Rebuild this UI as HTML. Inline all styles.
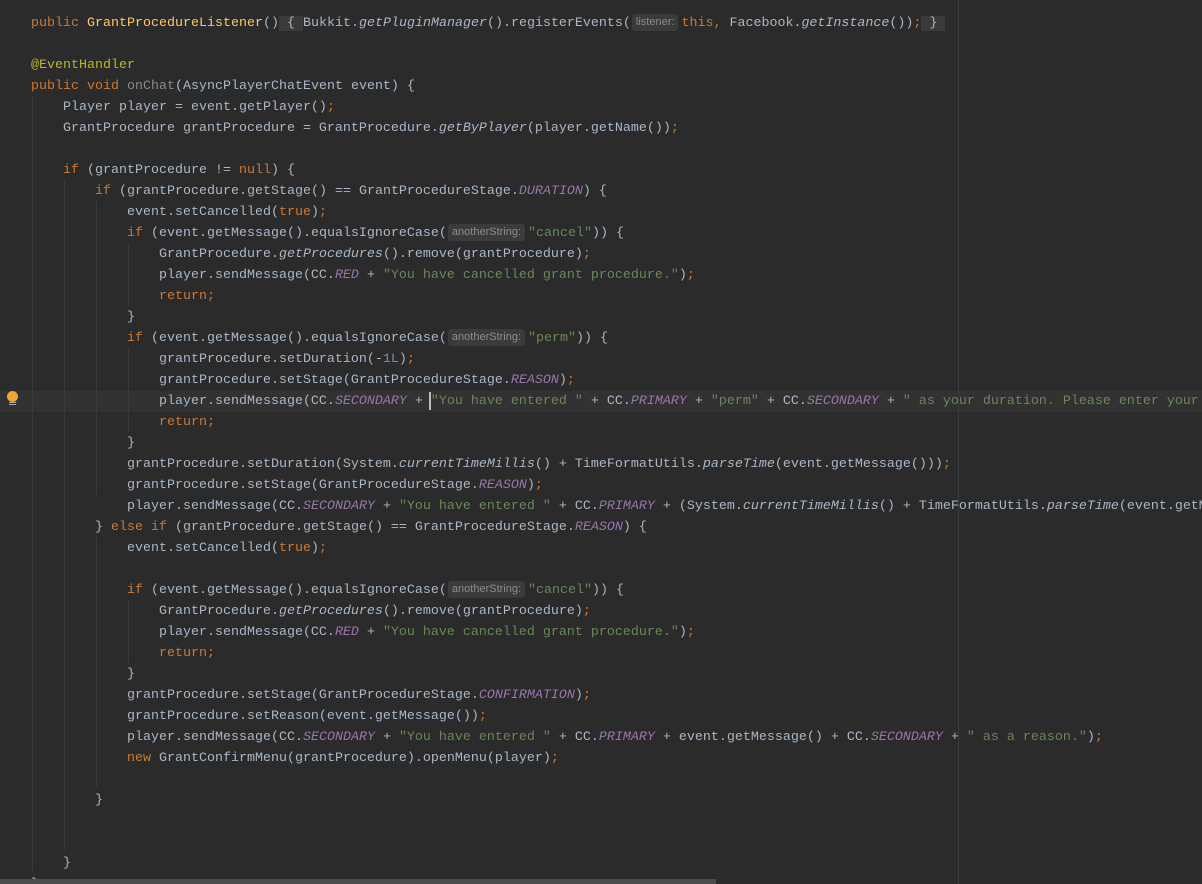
<!DOCTYPE html>
<html><head><meta charset="utf-8"><style>
html,body{margin:0;padding:0;background:#2b2b2b;width:1202px;height:884px;overflow:hidden;position:relative}
#w{position:absolute;left:0;top:0;width:1202px;height:884px;overflow:hidden}
#c{position:absolute;left:0;top:1px;width:1202px;height:884px}
.l{position:absolute;left:31px;height:21px;line-height:21px;white-space:pre;font-family:"Liberation Mono",monospace;font-size:13.33px;color:#a9b7c6}
.k{color:#cc7832}.m{color:#ffc66d}.a{color:#bbb529}.f{color:#9876aa;font-style:italic}.s{color:#6a8759}.n{color:#6897bb}.i{font-style:italic}.u{color:#8a8a8a}
.h{display:inline-block;font-family:"Liberation Sans",sans-serif;font-size:11px;color:#8c8c8c;background:#3b3b3b;border-radius:3px;padding:0 4px;margin:0 3px 0 1px;line-height:17px;vertical-align:1px;font-style:normal}
.fb{background:#3a3a3a}
.g{position:absolute;width:1px;background:#393939}
</style></head><body><div id="w">
<div style="position:absolute;left:0;top:391px;width:1202px;height:21px;background:#323232"></div>
<div style="position:absolute;left:958px;top:0;width:1px;height:884px;background:#3c3c3c"></div>
<div class="g" style="left:32px;top:96px;height:775px"></div>
<div class="g" style="left:64px;top:180px;height:670px"></div>
<div class="g" style="left:96px;top:201px;height:294px"></div>
<div class="g" style="left:96px;top:537px;height:250px"></div>
<div class="g" style="left:128px;top:243px;height:63px"></div>
<div class="g" style="left:128px;top:348px;height:84px"></div>
<div class="g" style="left:128px;top:600px;height:63px"></div>
<div style="position:absolute;left:7px;top:391px;width:11px;height:11px;border-radius:50%;background:#f0a732"></div>
<div style="position:absolute;left:9px;top:402px;width:7px;height:1px;background:#aaa"></div>
<div style="position:absolute;left:9px;top:404px;width:7px;height:1px;background:#aaa"></div>
<div style="position:absolute;left:429px;top:392px;width:2px;height:18px;background:#bbb"></div>
<div id="c">
<div class="l" style="top:12px"><span class="k">public </span><span class="m">GrantProcedureListener</span>()<span class="fb"> { </span>Bukkit.<span class="i">getPluginManager</span>().registerEvents(<span class="h">listener:</span><span class="k">this, </span>Facebook.<span class="i">getInstance</span>())<span class="k">;</span><span class="fb"> } </span></div>
<div class="l" style="top:54px"><span class="a">@EventHandler</span></div>
<div class="l" style="top:75px"><span class="k">public void </span><span class="u">onChat</span>(AsyncPlayerChatEvent event) {</div>
<div class="l" style="top:96px">    Player player = event.getPlayer()<span class="k">;</span></div>
<div class="l" style="top:117px">    GrantProcedure grantProcedure = GrantProcedure.<span class="i">getByPlayer</span>(player.getName())<span class="k">;</span></div>
<div class="l" style="top:159px">    <span class="k">if </span>(grantProcedure != <span class="k">null</span>) {</div>
<div class="l" style="top:180px">        <span class="k">if </span>(grantProcedure.getStage() == GrantProcedureStage.<span class="f">DURATION</span>) {</div>
<div class="l" style="top:201px">            event.setCancelled(<span class="k">true</span>)<span class="k">;</span></div>
<div class="l" style="top:222px">            <span class="k">if </span>(event.getMessage().equalsIgnoreCase(<span class="h">anotherString:</span><span class="s">"cancel"</span>)) {</div>
<div class="l" style="top:243px">                GrantProcedure.<span class="i">getProcedures</span>().remove(grantProcedure)<span class="k">;</span></div>
<div class="l" style="top:264px">                player.sendMessage(CC.<span class="f">RED </span>+ <span class="s">"You have cancelled grant procedure."</span>)<span class="k">;</span></div>
<div class="l" style="top:285px">                <span class="k">return;</span></div>
<div class="l" style="top:306px">            }</div>
<div class="l" style="top:327px">            <span class="k">if </span>(event.getMessage().equalsIgnoreCase(<span class="h">anotherString:</span><span class="s">"perm"</span>)) {</div>
<div class="l" style="top:348px">                grantProcedure.setDuration(-<span class="n">1L</span>)<span class="k">;</span></div>
<div class="l" style="top:369px">                grantProcedure.setStage(GrantProcedureStage.<span class="f">REASON</span>)<span class="k">;</span></div>
<div class="l" style="top:390px">                player.sendMessage(CC.<span class="f">SECONDARY </span>+ <span class="s">"You have entered " </span>+ CC.<span class="f">PRIMARY </span>+ <span class="s">"perm" </span>+ CC.<span class="f">SECONDARY </span>+ <span class="s">" as your duration. Please enter your</span></div>
<div class="l" style="top:411px">                <span class="k">return;</span></div>
<div class="l" style="top:432px">            }</div>
<div class="l" style="top:453px">            grantProcedure.setDuration(System.<span class="i">currentTimeMillis</span>() + TimeFormatUtils.<span class="i">parseTime</span>(event.getMessage()))<span class="k">;</span></div>
<div class="l" style="top:474px">            grantProcedure.setStage(GrantProcedureStage.<span class="f">REASON</span>)<span class="k">;</span></div>
<div class="l" style="top:495px">            player.sendMessage(CC.<span class="f">SECONDARY </span>+ <span class="s">"You have entered " </span>+ CC.<span class="f">PRIMARY </span>+ (System.<span class="i">currentTimeMillis</span>() + TimeFormatUtils.<span class="i">parseTime</span>(event.getM</div>
<div class="l" style="top:516px">        } <span class="k">else if </span>(grantProcedure.getStage() == GrantProcedureStage.<span class="f">REASON</span>) {</div>
<div class="l" style="top:537px">            event.setCancelled(<span class="k">true</span>)<span class="k">;</span></div>
<div class="l" style="top:579px">            <span class="k">if </span>(event.getMessage().equalsIgnoreCase(<span class="h">anotherString:</span><span class="s">"cancel"</span>)) {</div>
<div class="l" style="top:600px">                GrantProcedure.<span class="i">getProcedures</span>().remove(grantProcedure)<span class="k">;</span></div>
<div class="l" style="top:621px">                player.sendMessage(CC.<span class="f">RED </span>+ <span class="s">"You have cancelled grant procedure."</span>)<span class="k">;</span></div>
<div class="l" style="top:642px">                <span class="k">return;</span></div>
<div class="l" style="top:663px">            }</div>
<div class="l" style="top:684px">            grantProcedure.setStage(GrantProcedureStage.<span class="f">CONFIRMATION</span>)<span class="k">;</span></div>
<div class="l" style="top:705px">            grantProcedure.setReason(event.getMessage())<span class="k">;</span></div>
<div class="l" style="top:726px">            player.sendMessage(CC.<span class="f">SECONDARY </span>+ <span class="s">"You have entered " </span>+ CC.<span class="f">PRIMARY </span>+ event.getMessage() + CC.<span class="f">SECONDARY </span>+ <span class="s">" as a reason."</span>)<span class="k">;</span></div>
<div class="l" style="top:747px">            <span class="k">new </span>GrantConfirmMenu(grantProcedure).openMenu(player)<span class="k">;</span></div>
<div class="l" style="top:789px">        }</div>
<div class="l" style="top:852px">    }</div>
<div class="l" style="top:873px">}</div>
</div>
<div style="position:absolute;left:0;top:879px;width:716px;height:5px;background:#4b4b4b"></div>
</div></body></html>
